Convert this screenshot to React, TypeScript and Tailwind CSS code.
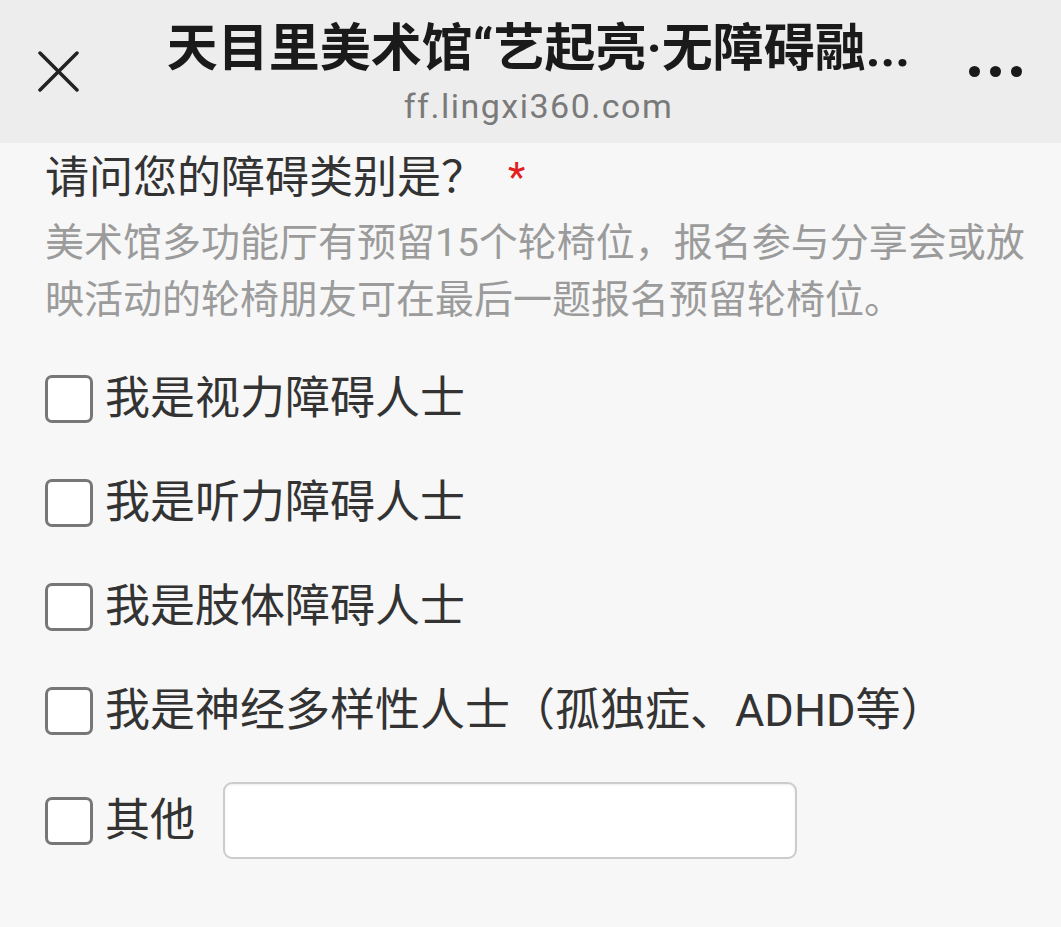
const options = [
  "我是视力障碍人士",
  "我是听力障碍人士",
  "我是肢体障碍人士",
  "我是神经多样性人士（孤独症、ADHD等）",
];

function Checkbox() {
  return <span className="w-[48px] h-[48px] shrink-0 rounded-[7px] border-[3px] border-[#777] bg-white" />;
}

export default function App() {
  return (
    <div
      className="min-h-screen w-[1061px] bg-[#f7f7f7]"
      style={{ fontFamily: 'Roboto, "Noto Sans CJK SC", sans-serif' }}
    >
      <header className="flex h-[143px] bg-[#ededed]">
        <div className="w-[120px] pl-[38px] pt-[51px]">
          <svg width="41" height="41" viewBox="0 0 41 41" fill="none" stroke="#222" strokeWidth="3.5" strokeLinecap="round">
            <path d="M2 2 L39 39 M39 2 L2 39" />
          </svg>
        </div>
        <div className="flex-1 flex flex-col items-center pt-[20px]">
          <h1 className="text-[51px] leading-[58px] font-bold text-[#1a1a1a] whitespace-nowrap">
            天目里美术馆“艺起亮·无障碍融...
          </h1>
          <p className="mt-[9px] text-[34px] leading-[38px] tracking-[1.5px] text-[#7a7a7a]">ff.lingxi360.com</p>
        </div>
        <div className="w-[104px] pl-[12px] pt-[66px] flex gap-[10px]">
          <span className="w-[11px] h-[11px] rounded-full bg-[#1a1a1a]" />
          <span className="w-[11px] h-[11px] rounded-full bg-[#1a1a1a]" />
          <span className="w-[11px] h-[11px] rounded-full bg-[#1a1a1a]" />
        </div>
      </header>

      <main className="px-[45px] pt-[7px] pb-[60px]">
        <div className="flex items-center text-[44px] leading-[56px] text-[#333]">
          <span>请问您的障碍类别是？</span>
          <span className="ml-[23px] text-[#e02020] text-[40px]">*</span>
        </div>
        <p className="mt-[9px] text-[39px] leading-[57px] text-[#9b9b9b] whitespace-nowrap">
          美术馆多功能厅有预留15个轮椅位，报名参与分享会或放
          <br />
          映活动的轮椅朋友可在最后一题报名预留轮椅位。
        </p>

        <div className="mt-[46px] flex flex-col gap-[56px]">
          {options.map((o) => (
            <label key={o} className="flex items-center h-[48px]">
              <Checkbox />
              <span className="ml-[12px] text-[45px] leading-[56px] text-[#333] whitespace-nowrap">{o}</span>
            </label>
          ))}
        </div>

        <div className="mt-[47px] flex items-center h-[77px]">
          <Checkbox />
          <span className="ml-[12px] text-[45px] leading-[56px] text-[#333]">其他</span>
          <input
            type="text"
            className="ml-[28px] w-[574px] h-[77px] rounded-[9px] border-2 border-[#ccc] bg-white shadow-[inset_0_1px_2px_rgba(0,0,0,0.08)] outline-none"
          />
        </div>
      </main>
    </div>
  );
}
